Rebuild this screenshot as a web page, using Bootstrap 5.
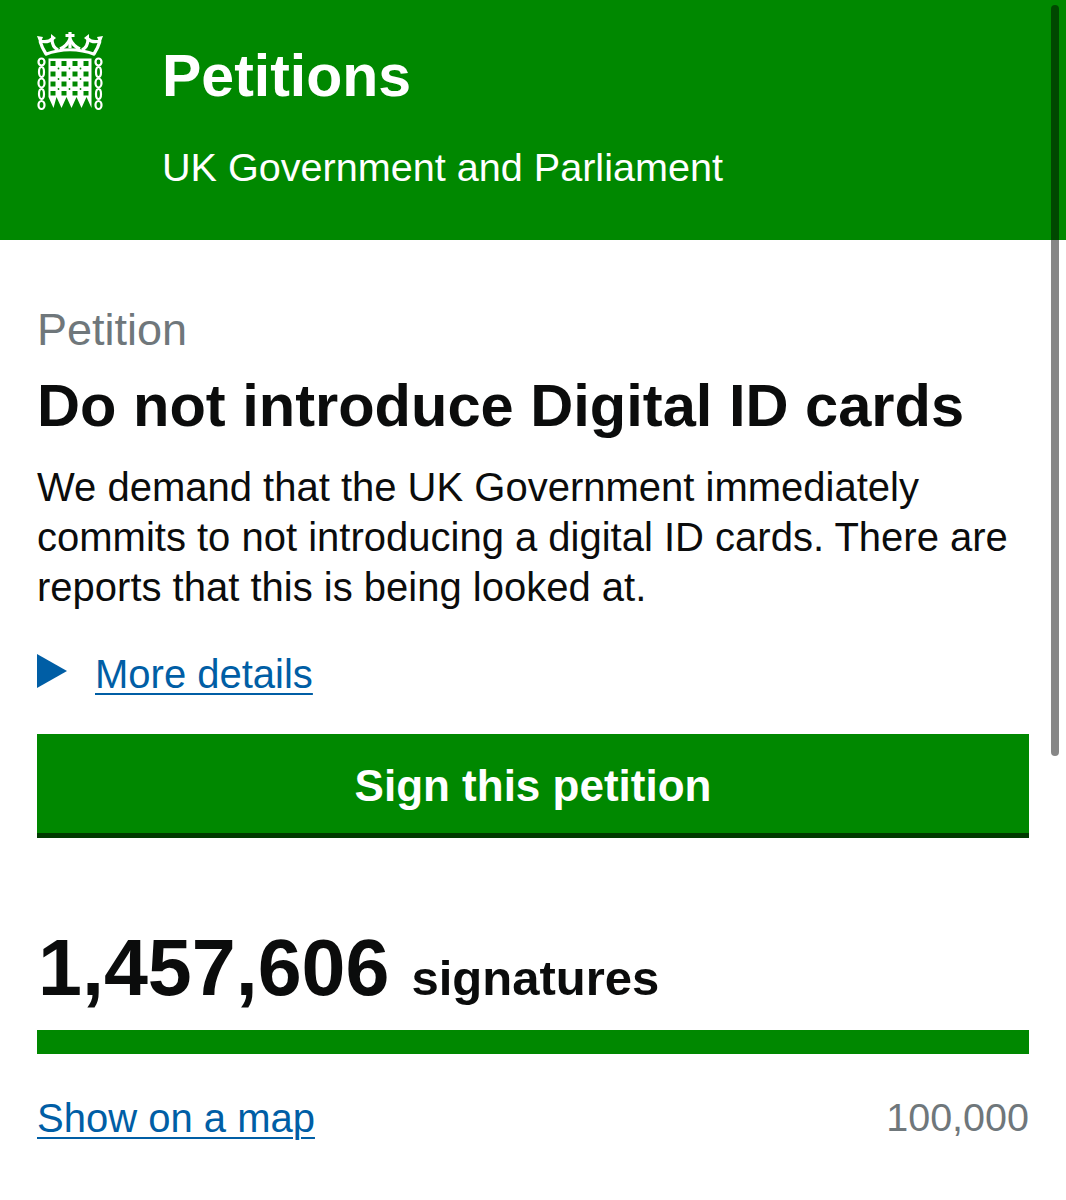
<!DOCTYPE html>
<html lang="en">
<head>
<meta charset="utf-8">
<title>Petitions</title>
<link href="https://cdn.jsdelivr.net/npm/bootstrap@5.3.0/dist/css/bootstrap.min.css" rel="stylesheet">
<style>
html,body{height:1200px;overflow:hidden;background:#fff;}
body{font-family:"Liberation Sans",Arial,sans-serif;color:#0b0c0c;}
.site-head{background:#008800;height:240px;padding:43px 0 0 37px;color:#fff;}
.crest{width:66px;height:80px;margin-top:-12px;flex:none;}
.brand-col{margin-left:59px;}
.brand-title{font-size:59px;font-weight:700;line-height:66px;margin:0;}
.brand-sub{font-size:39.6px;line-height:44px;margin-top:36px;}
.page-body{padding:66px 37px 0;}
.kicker{font-size:45px;line-height:48px;color:#6f777b;}
.main-title{font-size:59.6px;font-weight:700;line-height:64px;margin:20px 0 0;color:#0b0c0c;}
.lede{font-size:40px;line-height:50px;margin:24px 0 0;}
.more-row{margin-top:34px;height:50px;}
.tri{width:0;height:0;border-left:30px solid #005ea5;border-top:17px solid transparent;border-bottom:17px solid transparent;margin-right:28px;flex:none;}
.gov-link{font-size:40px;color:#005ea5;text-decoration:underline;text-underline-offset:5px;text-decoration-thickness:2px;}
.more-row .gov-link{position:relative;top:3px;}
.sign-btn{display:block;width:100%;height:104px;margin-top:38px;background:#008800;border:0;border-bottom:5px solid #003a00;border-radius:0;color:#fff;font-size:44px;font-weight:700;line-height:103px;padding:0;}
.sign-btn:hover{background:#008800;color:#fff;}
.count-row{margin-top:90px;height:80px;}
.count-num{font-size:79px;font-weight:700;line-height:80px;padding-left:1px;}
.count-word{font-size:49px;font-weight:700;margin-left:22px;}
.bar-track{height:24px;margin-top:22px;background:#008800;border-radius:0;}
.foot-row{margin-top:34px;}
.target{font-size:39.5px;color:#6f777b;}
.fake-scroll{position:absolute;top:5px;right:7px;width:8px;height:751px;background:rgba(0,0,0,.47);border-radius:4px;}
</style>
</head>
<body class="position-relative">
<header class="site-head d-flex align-items-start">
<svg class="crest" viewBox="0 0 66 80" fill="#fff" aria-hidden="true">
<g fill="none" stroke="#fff" stroke-width="3.200">
<path d="M8 23.500Q33 14 58 23.500"/>
<path d="M3 10Q5 17 9 23M63 10Q61 17 57 23"/>
<path d="M3 10Q11 12 15 8M63 10Q55 12 51 8"/>
<path d="M15 8Q15 16 21 19M51 8Q51 16 45 19"/>
<path d="M33 8Q30 15 23 18M33 8Q36 15 43 18"/>
<path d="M33 1V17M28.500 4.500H37.500"/>
</g>
<path d="M0 5l6 1-3 7zM66 5l-6 1 3 7zM14 3l5 4-5 4zM52 3l-5 4 5 4z"/>
<path d="M11.500 27.500h43V77l-5-11-5 11-5-11-5 11-5-11-5 11-5-11-3 11-5-11z"/>
<g fill="#008800">
<rect x="13.500" y="30" width="5" height="5"/><rect x="24.500" y="30" width="5" height="5"/><rect x="35.500" y="30" width="5" height="5"/><rect x="46.500" y="30" width="5" height="5"/>
<rect x="13.500" y="40.500" width="5" height="5"/><rect x="24.500" y="40.500" width="5" height="5"/><rect x="35.500" y="40.500" width="5" height="5"/><rect x="46.500" y="40.500" width="5" height="5"/>
<rect x="13.500" y="50.500" width="5" height="5"/><rect x="24.500" y="50.500" width="5" height="5"/><rect x="35.500" y="50.500" width="5" height="5"/><rect x="46.500" y="50.500" width="5" height="5"/>
<rect x="13.500" y="60" width="5" height="4.500"/><rect x="24.500" y="60" width="5" height="4.500"/><rect x="35.500" y="60" width="5" height="4.500"/><rect x="46.500" y="60" width="5" height="4.500"/>
<circle cx="21.500" cy="37.500" r=".9"/><circle cx="32.500" cy="37.500" r=".9"/><circle cx="43.500" cy="37.500" r=".9"/>
<circle cx="21.500" cy="48" r=".9"/><circle cx="32.500" cy="48" r=".9"/><circle cx="43.500" cy="48" r=".9"/>
<circle cx="21.500" cy="58" r=".9"/><circle cx="32.500" cy="58" r=".9"/><circle cx="43.500" cy="58" r=".9"/>
</g>
<g fill="none" stroke="#fff" stroke-width="2.200">
<ellipse cx="4.500" cy="31" rx="3" ry="3.500"/><ellipse cx="4.500" cy="41" rx="2.500" ry="5"/><ellipse cx="4.500" cy="52" rx="3" ry="4.500"/><ellipse cx="4.500" cy="63" rx="2.500" ry="5"/><ellipse cx="4.500" cy="74" rx="3" ry="4"/>
<ellipse cx="61.500" cy="31" rx="3" ry="3.500"/><ellipse cx="61.500" cy="41" rx="2.500" ry="5"/><ellipse cx="61.500" cy="52" rx="3" ry="4.500"/><ellipse cx="61.500" cy="63" rx="2.500" ry="5"/><ellipse cx="61.500" cy="74" rx="3" ry="4"/>
</g>
</svg>
<div class="brand-col">
<div class="brand-title">Petitions</div>
<div class="brand-sub">UK Government and Parliament</div>
</div>
</header>
<main class="page-body">
<div class="kicker">Petition</div>
<h1 class="main-title">Do not introduce Digital ID cards</h1>
<p class="lede">We demand that the UK Government immediately commits to not introducing a digital ID cards. There are reports that this is being looked at.</p>
<div class="more-row d-flex align-items-center"><span class="tri"></span><a class="gov-link" href="#">More details</a></div>
<button class="btn sign-btn" type="button">Sign this petition</button>
<div class="count-row d-flex align-items-baseline"><span class="count-num">1,457,606</span><span class="count-word">signatures</span></div>
<div class="progress bar-track"></div>
<div class="foot-row d-flex justify-content-between align-items-center"><a class="gov-link" href="#">Show on a map</a><span class="target">100,000</span></div>
</main>
<div class="fake-scroll"></div>
<script src="https://cdn.jsdelivr.net/npm/bootstrap@5.3.0/dist/js/bootstrap.bundle.min.js"></script>
</body>
</html>
